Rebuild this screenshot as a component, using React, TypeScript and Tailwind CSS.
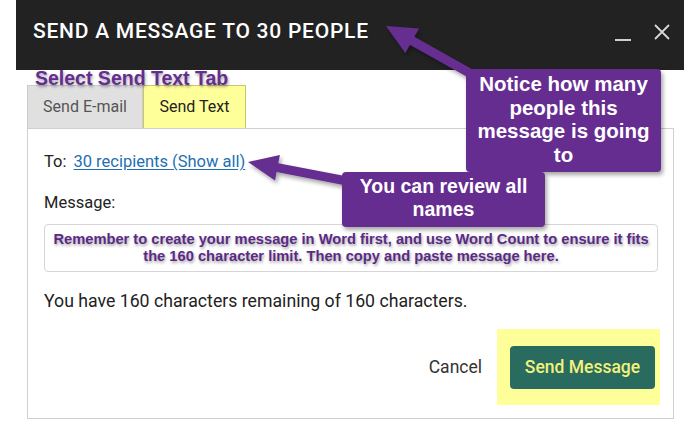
import React from "react";

type Pt = [number, number];

function arrowPoints(tail: Pt, tip: Pt, shaft: number, headLen: number, headW: number) {
  const dx = tip[0] - tail[0];
  const dy = tip[1] - tail[1];
  const len = Math.hypot(dx, dy);
  const ux = dx / len;
  const uy = dy / len;
  const nx = -uy;
  const ny = ux;
  const bx = tip[0] - ux * headLen;
  const by = tip[1] - uy * headLen;
  const pts: Pt[] = [
    [tail[0] + (nx * shaft) / 2, tail[1] + (ny * shaft) / 2],
    [bx + (nx * shaft) / 2, by + (ny * shaft) / 2],
    [bx + (nx * headW) / 2, by + (ny * headW) / 2],
    tip,
    [bx - (nx * headW) / 2, by - (ny * headW) / 2],
    [bx - (nx * shaft) / 2, by - (ny * shaft) / 2],
    [tail[0] - (nx * shaft) / 2, tail[1] - (ny * shaft) / 2],
  ];
  return pts.map((p) => p.join(",")).join(" ");
}

function Arrows() {
  return (
    <svg
      className="absolute inset-0 pointer-events-none"
      width={684}
      height={432}
      viewBox="0 0 684 432"
    >
      <defs>
        <filter id="shadow" x="-20%" y="-20%" width="140%" height="140%">
          <feDropShadow dx="2" dy="3" stdDeviation="2" floodColor="#000" floodOpacity="0.35" />
        </filter>
      </defs>
      <polygon
        points={arrowPoints([482, 80], [386, 26], 9, 30, 28)}
        fill="#662d91"
        filter="url(#shadow)"
      />
      <polygon
        points={arrowPoints([352, 182], [248, 162], 9, 30, 26)}
        fill="#662d91"
        filter="url(#shadow)"
      />
    </svg>
  );
}

export default function App() {
  const annot = { fontFamily: '"Liberation Sans", Arial, sans-serif' };

  return (
    <div
      className="relative w-[684px] h-[432px] bg-white overflow-hidden"
      style={{ fontFamily: "Roboto, sans-serif" }}
    >
      <header className="ml-4 h-[70px] bg-[#222222] flex items-center justify-between pl-[17px] pr-[14px] pb-[7px]">
        <h1 className="text-white text-[21px] font-medium tracking-[0.75px]">
          SEND A MESSAGE TO 30 PEOPLE
        </h1>
        <div className="flex items-center gap-[22px] text-[#cfcfcf]">
          <span className="block w-[16px] h-[2px] bg-[#cfcfcf] mt-[16px] mr-[1px]" />
          <svg width="16" height="16" viewBox="0 0 16 16">
            <path d="M1 1 L15 15 M15 1 L1 15" stroke="#d8d8d8" strokeWidth="1.8" />
          </svg>
        </div>
      </header>

      <div className="ml-[27px] mt-[15px] w-[647px]">
        <div className="flex h-[43px]">
          <div className="w-[116px] bg-[#e0e0e0] border border-b-0 border-[#cccccc] flex items-center justify-center text-[16px] text-[#555555]">
            Send E-mail
          </div>
          <div className="w-[103px] bg-[#ffff99] border border-b-0 border-[#c8c86a] flex items-center justify-center text-[16px] text-[#222222]">
            Send Text
          </div>
        </div>
        <div className="h-[291px] border border-[#cfcfcf] pl-4 pr-4 pt-[21px]">
          <div className="flex items-center gap-[7px] text-[16.5px] text-[#222222]">
            <span>To:</span>
            <a className="text-[#1f6fb2] underline underline-offset-2">30 recipients (Show all)</a>
          </div>
          <div className="mt-[16px] text-[16.5px] text-[#222222]">Message:</div>
          <div className="mt-[8px] w-[614px] h-[48px] border border-[#d6d6d6] rounded-[4px] flex items-center justify-center text-center">
            <p
              className="text-[14.7px] font-bold leading-[17px] text-[#5a2a86] whitespace-nowrap [text-shadow:1px_2px_3px_rgba(0,0,0,0.35)]"
              style={annot}
            >
              Remember to create your message in Word first, and use Word Count to ensure it fits
              <br />
              the 160 character limit. Then copy and paste message here.
            </p>
          </div>
          <div className="mt-[16px] text-[17.7px] text-[#222222]">
            You have 160 characters remaining of 160 characters.
          </div>
          <div className="mt-[15px] flex items-center justify-end">
            <span className="text-[17.5px] text-[#333333] mr-[15px]">Cancel</span>
            <div className="bg-[#ffff99] w-[163px] h-[76px] flex items-center pl-[13px] mr-[-3px]">
              <button className="w-[145px] h-[43px] rounded-[4px] bg-[#2a6b5f] text-[#f2f27a] text-[17.5px] font-medium">
                Send Message
              </button>
            </div>
          </div>
        </div>
      </div>

      <Arrows />

      <div
        className="absolute left-[35px] top-[64px] text-[19.5px] font-bold text-[#662d91] [text-shadow:1px_2px_3px_rgba(0,0,0,0.35)]"
        style={annot}
      >
        Select Send Text Tab
      </div>

      <div
        className="absolute left-[466px] top-[69px] w-[195px] h-[103px] rounded-[4px] bg-[#662d91] text-white text-[20.5px] font-bold leading-[23.5px] text-center pt-[3px] shadow-[2px_3px_4px_rgba(0,0,0,0.35)]"
        style={annot}
      >
        Notice how many
        <br />
        people this
        <br />
        message is going
        <br />
        to
      </div>

      <div
        className="absolute left-[342px] top-[172px] w-[203px] h-[55px] rounded-[4px] bg-[#662d91] text-white text-[19.5px] font-bold leading-[23px] text-center pt-[3px] shadow-[2px_3px_4px_rgba(0,0,0,0.35)]"
        style={annot}
      >
        You can review all
        <br />
        names
      </div>
    </div>
  );
}
